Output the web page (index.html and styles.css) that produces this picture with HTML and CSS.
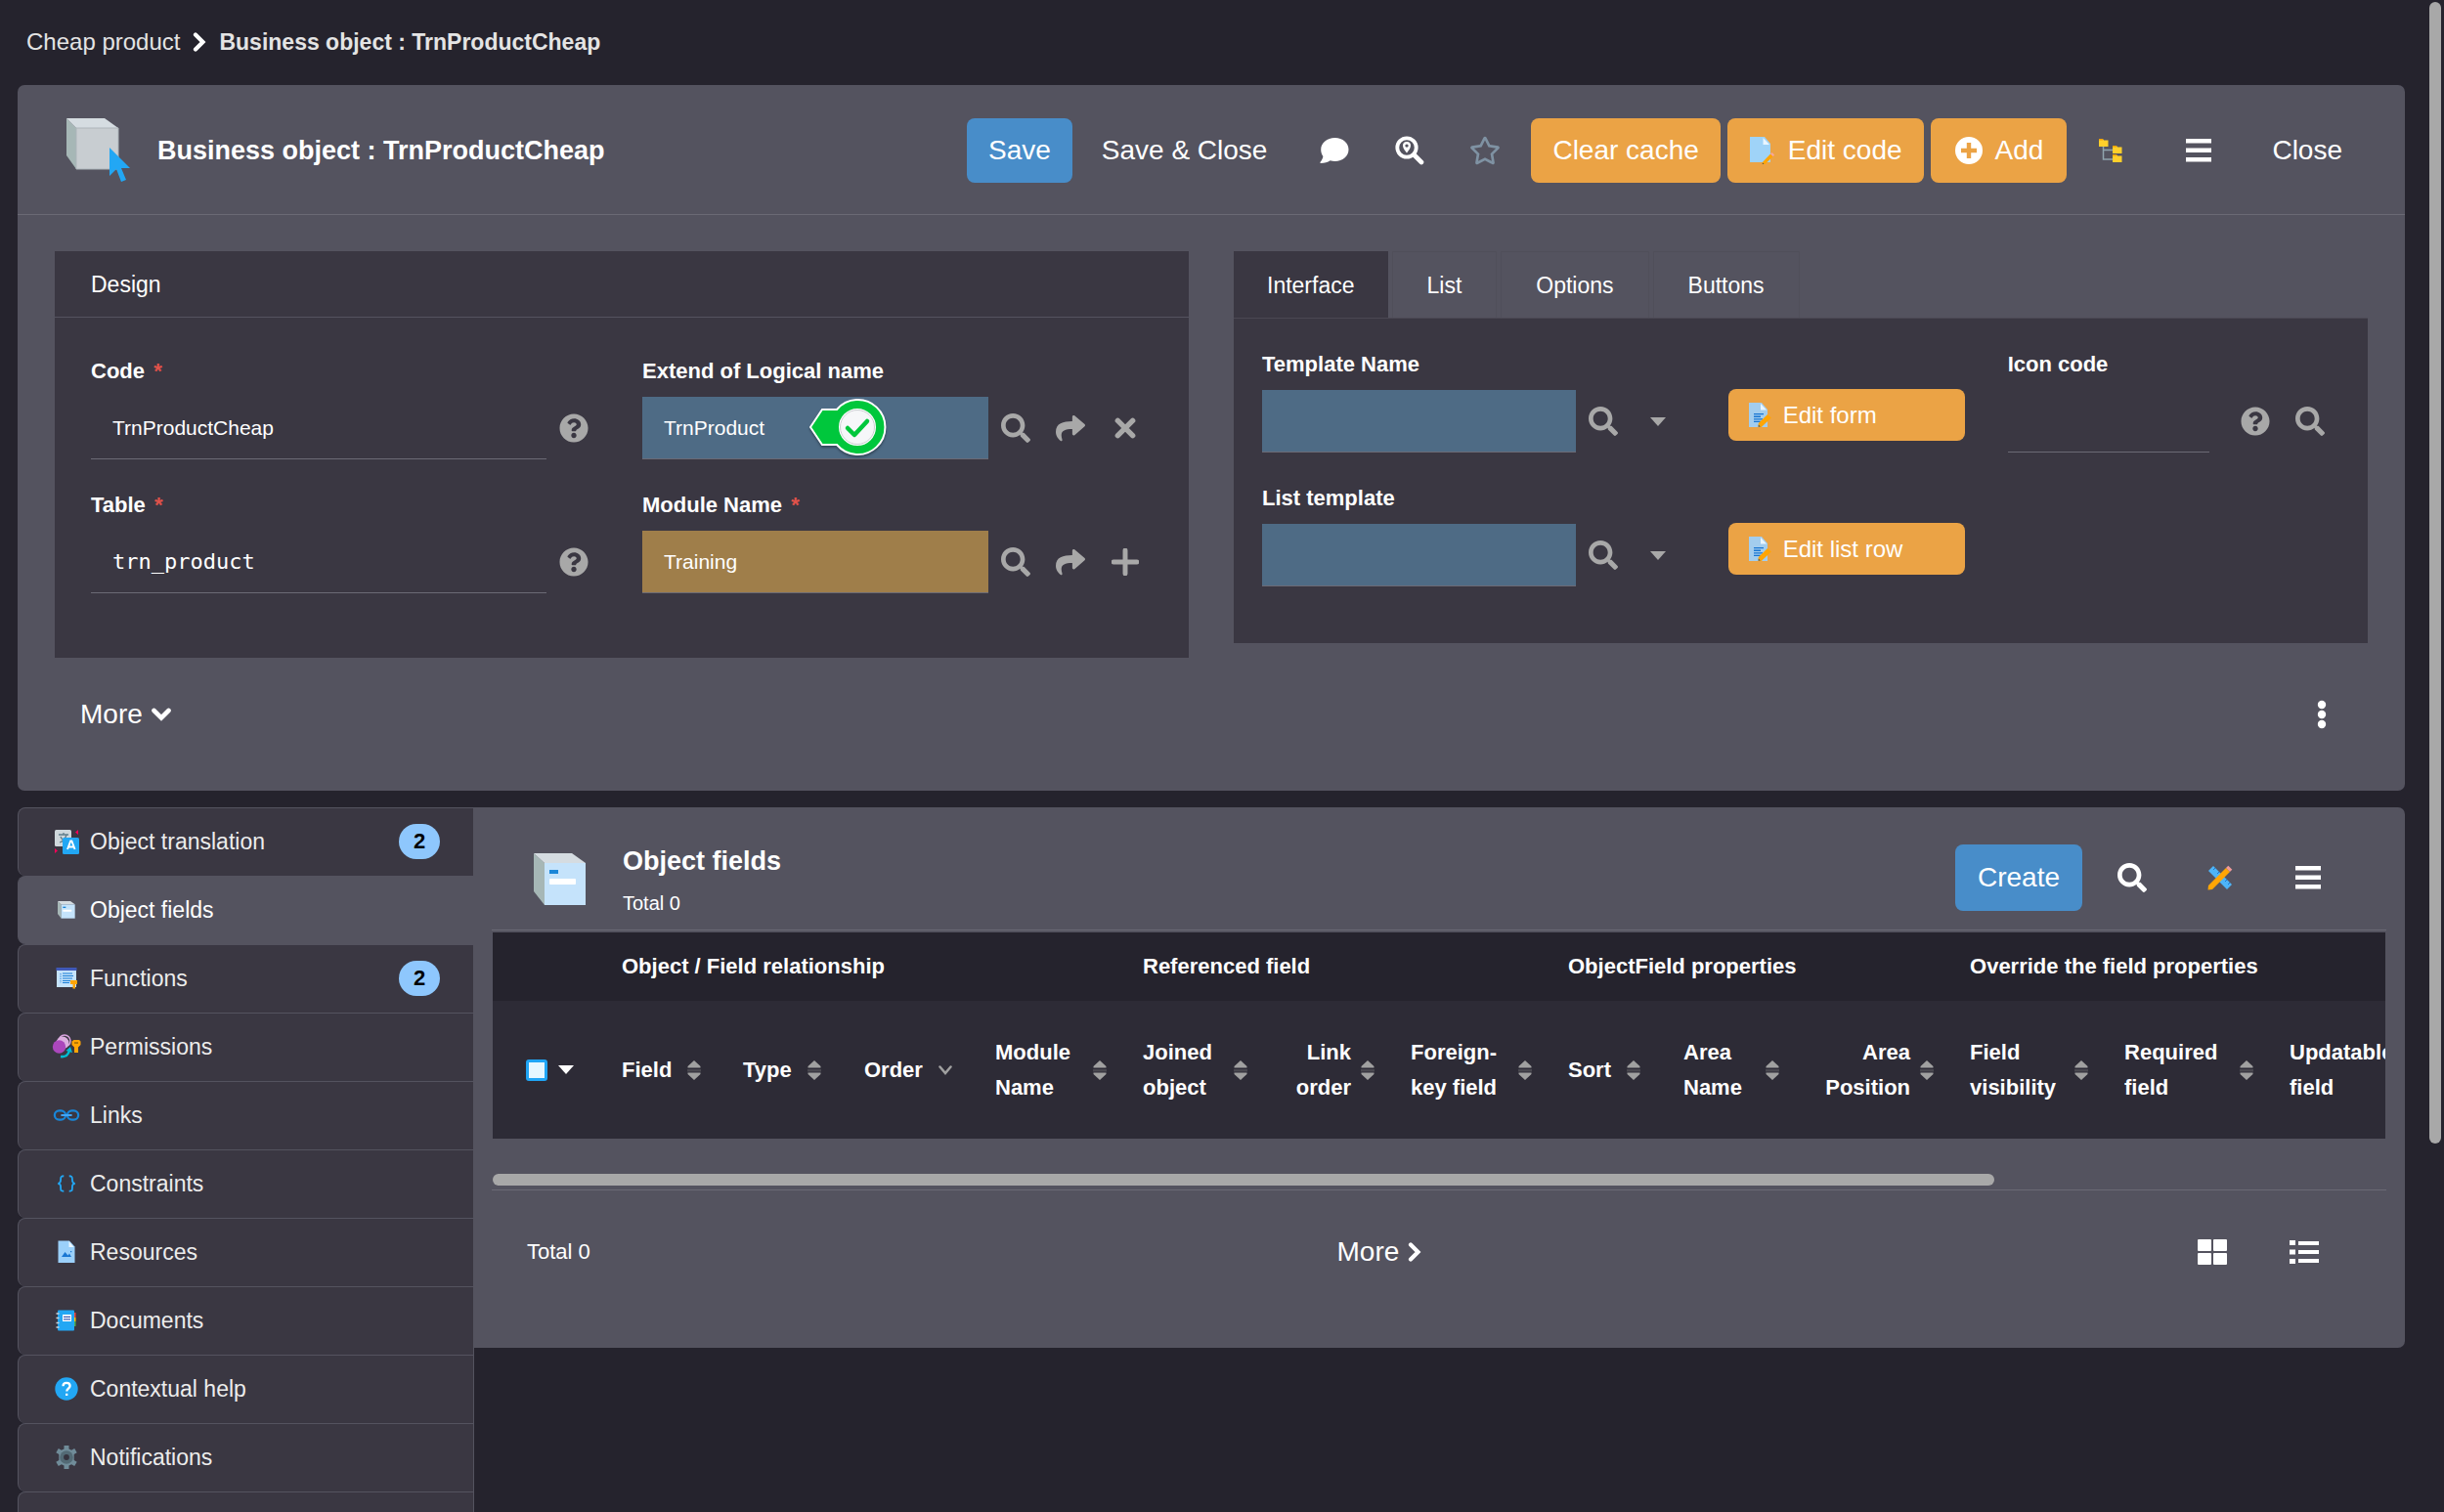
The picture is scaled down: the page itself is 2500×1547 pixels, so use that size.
FILE: index.html
```html
<!DOCTYPE html>
<html lang="en">
<head>
<meta charset="utf-8">
<title>Business object : TrnProductCheap</title>
<link rel="stylesheet" href="styles.css">
</head>
<body>
<svg class="sprite" aria-hidden="true">
  <symbol id="search" viewBox="0 0 512 512"><path d="M505 442.7L405.3 343c-4.500-4.500-10.600-7-17-7H372c27.600-35.300 44-79.700 44-128C416 93.100 322.900 0 208 0S0 93.100 0 208s93.100 208 208 208c48.300 0 92.700-16.400 128-44v16.300c0 6.400 2.500 12.500 7 17l99.700 99.700c9.400 9.400 24.600 9.400 33.900 0l28.300-28.300c9.400-9.400 9.400-24.600.1-34zM208 336c-70.700 0-128-57.200-128-128 0-70.700 57.200-128 128-128 70.700 0 128 57.200 128 128 0 70.700-57.200 128-128 128z"/></symbol>
  <symbol id="help" viewBox="0 0 512 512"><path d="M504 256c0 136.997-111.043 248-248 248S8 392.997 8 256C8 119.083 119.043 8 256 8s248 111.083 248 248zM262.655 90c-54.497 0-89.255 22.957-116.549 63.758-3.536 5.286-2.353 12.415 2.715 16.258l34.699 26.310c5.205 3.947 12.621 3.008 16.665-2.122 17.864-22.658 30.113-35.797 57.303-35.797 20.429 0 45.698 13.148 45.698 32.958 0 14.976-12.363 22.667-32.534 33.976C247.128 238.528 216 254.941 216 296v4c0 6.627 5.373 12 12 12h56c6.627 0 12-5.373 12-12v-1.333c0-28.462 83.186-29.647 83.186-106.667 0-58.002-60.165-102-116.531-102zM256 338c-25.365 0-46 20.635-46 46 0 25.364 20.635 46 46 46s46-20.636 46-46c0-25.365-20.635-46-46-46z"/></symbol>
  <symbol id="share" viewBox="0 0 512 512"><path d="M503.691 189.836L327.687 37.851C312.281 24.546 288 35.347 288 56.015v80.053C127.371 137.907 0 170.100 0 322.326c0 61.441 39.581 122.309 83.333 154.132 13.653 9.931 33.111-2.533 28.077-18.631C66.066 312.814 132.917 274.316 288 272.085V360c0 20.700 24.300 31.453 39.687 18.164l176.004-152c11.071-9.562 11.086-26.753 0-36.328z"/></symbol>
  <symbol id="star" viewBox="0 0 576 512"><path d="M528.1 171.500L382 150.200 316.700 17.800c-11.700-23.600-45.600-23.900-57.400 0L194 150.200 47.900 171.500c-26.200 3.800-36.700 36.100-17.700 54.600l105.700 103-25 145.500c-4.500 26.300 23.200 46 46.400 33.700L288 439.600l130.700 68.700c23.200 12.200 50.900-7.400 46.400-33.700l-25-145.500 105.700-103c19-18.500 8.500-50.800-17.700-54.600zM388.600 312.300l23.700 138.400L288 385.400l-124.300 65.300 23.700-138.400-100.600-98 139-20.200 62.200-126 62.200 126 139 20.200-100.600 98z"/></symbol>
  <symbol id="times" viewBox="0 0 22 22"><path d="M4 4L18 18M18 4L4 18" fill="none" stroke="currentColor" stroke-width="5" stroke-linecap="round"/></symbol>
  <symbol id="plus" viewBox="0 0 26 26"><path d="M13 2V24M2 13H24" fill="none" stroke="currentColor" stroke-width="4.600" stroke-linecap="round"/></symbol>
  <symbol id="caret" viewBox="0 0 16 9"><path d="M0 0H16L8 9z"/></symbol>
  <symbol id="right" viewBox="0 0 14 20"><path d="M3 2.500L10.500 10L3 17.500" fill="none" stroke="currentColor" stroke-width="4.200" stroke-linecap="round"/></symbol>
  <symbol id="down" viewBox="0 0 20 14"><path d="M2.500 3L10 10.500L17.500 3" fill="none" stroke="currentColor" stroke-width="4.600" stroke-linecap="round"/></symbol>
  <symbol id="thin-down" viewBox="0 0 14 10"><path d="M1.500 1.500L7 8L12.500 1.500" fill="none" stroke="currentColor" stroke-width="2.500" stroke-linecap="round"/></symbol>
  <symbol id="comment" viewBox="0 0 30 28"><path d="M15.500 1C23.500 1 29.500 6.200 29.500 13S23.500 25 15.500 25c-1.700 0-3.300-.2-4.800-.7C8 26.200 5 27 1 27c-.7 0-.8-.7-.4-1.200C2 24.200 3.100 22.200 3.400 20 2 18 1.200 15.600 1.200 13 1.200 6.200 7.500 1 15.500 1z"/></symbol>
  <symbol id="zoom-pin" viewBox="0 0 30 30"><circle cx="12" cy="12" r="9.700" fill="none" stroke="currentColor" stroke-width="3.800"/><path d="M19.500 19.500L27 27" stroke="currentColor" stroke-width="4.600" stroke-linecap="round"/><path d="M12 6a4 4 0 0 1 4 4c0 3-2.400 5-4 7.500C10.400 15 8 13 8 10a4 4 0 0 1 4-4zm0 2.400a1.700 1.700 0 1 0 0 3.400 1.700 1.700 0 0 0 0-3.400z" fill-rule="evenodd"/></symbol>
  <symbol id="menu" viewBox="0 0 28 24"><path d="M1 0H27V4.500H1zM1 9.500H27V14H1zM1 19H27V23.500H1z"/></symbol>
  <symbol id="dots" viewBox="0 0 10 30"><circle cx="5" cy="5" r="4.200"/><circle cx="5" cy="15" r="4.200"/><circle cx="5" cy="25" r="4.200"/></symbol>
  <symbol id="add" viewBox="0 0 30 30"><path fill-rule="evenodd" d="M15 1a14 14 0 1 0 0 28 14 14 0 0 0 0-28zM12.800 7h4.400v5.800H23v4.400h-5.800V23h-4.400v-5.800H7v-4.400h5.800z"/></symbol>
  <symbol id="sort" viewBox="0 0 14 20"><path d="M7 0L13.500 6V7.500H.5V6zM7 20L13.500 14V12.500H.5V14z"/><path d="M0 9H14V9.600H0zM0 10.600H14V11.200H0z" opacity=".5"/></symbol>
  <symbol id="tiles" viewBox="0 0 30 26"><rect width="14" height="12" rx="1"/><rect x="16" width="14" height="12" rx="1"/><rect y="14" width="14" height="12" rx="1"/><rect x="16" y="14" width="14" height="12" rx="1"/></symbol>
  <symbol id="list" viewBox="0 0 30 26"><path d="M0 1h6v5H0zM9 2h21v4H9zM0 10.500h6v5H0zM9 11h21v4H9zM0 20h6v5H0zM9 20h21v4H9z"/></symbol>
  <symbol id="tree" viewBox="0 0 24 24"><path d="M4.500 6V21H16M4.500 11.500H16" fill="none" stroke="#90a4ae" stroke-width="1.500"/><path d="M0 0h4l1 1.500h4.500V8H0zM14 7h4l1 1.500h4.500V15H14zM14 16h4l1 1.500h4.500V24H14z" fill="#ffcf2b"/><path d="M0 0h4v1.500H0zM14 7h4v1.500h-4zM14 16h4v1.500h-4z" fill="#f5a100"/></symbol>
  <symbol id="file-edit" viewBox="0 0 26 28"><path d="M0 0h15l6 7v19H0z" fill="#9fd3f8"/><path d="M13.500 1l6.500 7h-6.500z" fill="#eaf6ff"/><path d="M21 17.500l2.600 2.400L15 28.500l-2.200-.2.300-2.600z" fill="#ffa505"/><path d="M21 17.500l1.500-1.500 2.600 2.400-1.500 1.500z" fill="#f5a6a0"/><path d="M12.900 26.500l1.500 1.500-1.600.3z" fill="#37474f"/></symbol>
  <symbol id="form-edit" viewBox="0 0 24 26"><path d="M0 0h13l6 7v18H0z" fill="#a3cdee"/><path d="M12 1l6 6.500h-6z" fill="#eaf6ff"/><path d="M5 11h10v1.300H5zM5 13.600h7v1.300H5zM5 16.200h9v1.300H5zM5 18.800h7v1.300H5z" fill="#1976d2"/><path d="M19 12l3.800 3.600L12.800 25l-3.300-.2.300-3.800z" fill="#ffa505"/><path d="M9.800 22.500l2 2-2.300.3z" fill="#455a64"/></symbol>
  <symbol id="ruler" viewBox="0 0 26 26"><path d="M1 6L6 1L25 20L20 25z" fill="#4db4f7"/><path d="M8 3l-2 2M12 7l-2 2M16 11l-2 2M20 15l-2 2M23 18l-2 2" stroke="#1976d2"/><path d="M19 3l4 4L5 25l-4.500.5L1 21z" fill="#ffa505"/><path d="M19 3l2.300-2.300 4 4L23 7z" fill="#ef9a9a"/></symbol>
  <symbol id="cube-cursor" viewBox="0 0 66 66"><path d="M0 0L10 10V52L0 38z" fill="#a6b7b6"/><path d="M0 0H39L53 10H10z" fill="#d5dce1"/><path d="M10 10H53V52H10z" fill="#c8cdd1" stroke="#adb5ba"/><path d="M44 30L65 51H56L61 63L56 65L51 52L44 59z" fill="#22a7f4"/></symbol>
  <symbol id="cube-field" viewBox="0 0 54 54"><path d="M0 0L11 10V53L0 39z" fill="#a6b7b6"/><path d="M0 0H39L53 10H11z" fill="#d5dce1"/><path d="M11 10H53V53H11z" fill="#c5e3fb"/><path d="M16 17h9v4h-9z" fill="#1b86d8"/><rect x="16" y="26" width="27" height="6" rx="1" fill="#fff"/></symbol>
  <symbol id="translate" viewBox="0 0 26 26"><rect x="1" y="1" width="17" height="17" rx="1.500" fill="#cfd8dc"/><path d="M5 6h10M10 4v2M13 6c-1 4-4 7-7 8M7 8c1 3 4 5 7 6" stroke="#607d8b" stroke-width="1.300" fill="none"/><path d="M25 1v5l-3-2.500zM1 20v5l3-2.500z" fill="#f50057"/><rect x="9" y="9" width="17" height="17" rx="1.500" fill="#22a7f4"/><path d="M14 21l3.200-8.500h1.200L21.600 21M15.200 18.500h5" stroke="#fff" stroke-width="1.900" fill="none"/></symbol>
  <symbol id="functions" viewBox="0 0 26 26"><path d="M3 3h20v19H3z" fill="#c5e3fb"/><path d="M2.500 2h21v3h-21z" fill="#4059b8"/><path d="M9 8h10M9 10.500h11M9 13h10M9 15.500h8M9 17.500h7" stroke="#1b7fd6" stroke-width="1.200"/><path d="M7 8v10" stroke="#1b7fd6" stroke-dasharray="1.200"/><path d="M17 15h7v4h-2v4.500h-2.500V19H17z" fill="#ffa505"/></symbol>
  <symbol id="permissions" viewBox="0 0 30 26"><circle cx="13" cy="7" r="6" fill="none" stroke="#d9a3df" stroke-width="1.500"/><circle cx="11" cy="9" r="6.500" fill="#dcaee0"/><circle cx="7.500" cy="13" r="6.700" fill="#ab47bc"/><path d="M9 23q7 1 9-6" stroke="#00bcd4" stroke-width="2.500" fill="none"/><path d="M14.500 17l4.500-4 2 6z" fill="#00bcd4"/><path d="M22.500 6h5.500l1.500 1.500V11L27 13.500V19h-4v-5.500L20.500 11V7.500z" fill="#ffa505"/><path d="M23 9h4" stroke="#6d4c00"/></symbol>
  <symbol id="links" viewBox="0 0 30 14"><rect x="2" y="2" width="12" height="10" rx="5" fill="none" stroke="#1986d8" stroke-width="2.400"/><rect x="16" y="2" width="12" height="10" rx="5" fill="none" stroke="#1986d8" stroke-width="2.400"/><path d="M9 7h12" stroke="#42a5f5" stroke-width="2.200"/></symbol>
  <symbol id="braces" viewBox="0 0 22 20"><path d="M8 1.500C5 1.500 4.500 2.500 4.500 5S4.500 9.500 1.500 10C4.500 10.500 4.500 12 4.500 15S5 18.500 8 18.500M14 1.500C17 1.500 17.500 2.500 17.500 5S17.500 9.500 20.500 10C17.500 10.500 17.500 12 17.500 15S17 18.500 14 18.500" fill="none" stroke="#22a7f4" stroke-width="2"/></symbol>
  <symbol id="resource" viewBox="0 0 18 24"><path d="M.5.500H12l5.500 6V23H.5z" fill="#9bd0fa"/><path d="M11.500 1l5 6h-5z" fill="#eaf6ff"/><path d="M4 17l3.500-5 3 3.500 1.500-2 2 3.500zM13 11h1.300v1.300H13z" fill="#1976d2"/></symbol>
  <symbol id="document" viewBox="0 0 22 22"><path d="M18 3h2.500v5H18z" fill="#f44336"/><path d="M18 8h2.500v4H18z" fill="#ffc107"/><path d="M18 12h2.500v5H18z" fill="#4caf50"/><rect x="2" y=".5" width="17" height="21" rx="1" fill="#22a7f4"/><path d="M.5 4h3M.5 8.500h3M.5 13.500h3M.5 18h3" stroke="#cfd8dc" stroke-width="1.300"/><path d="M7 5h9v7H7z" fill="#fff"/><path d="M8 7.300h7M8 9.800h7" stroke="#3f5fb5" stroke-width="1.300"/></symbol>
  <symbol id="gear" viewBox="0 0 24 24"><path d="M9.500 0h5v3.600l2.600 1.100 3.100-1.800 2.500 4.300-3 1.900v5.800l3 1.900-2.500 4.300-3.100-1.800-2.600 1.100V24h-5v-3.600l-2.600-1.100-3.100 1.800-2.500-4.300 3-1.900V9.100l-3-1.900 2.500-4.300 3.100 1.800 2.600-1.100z" fill="#708c99"/><circle cx="12" cy="12" r="6.800" fill="#536a75"/><circle cx="12" cy="12" r="2.900" fill="#35333e"/></symbol>
</svg>

<div class="app">
  <nav class="breadcrumb" aria-label="Breadcrumb">
    <a href="#">Cheap product</a>
    <svg class="chevron-right"><use href="#right"/></svg>
    <strong>Business object : TrnProductCheap</strong>
  </nav>

  <main>
    <section class="panel">
      <header class="panel-head">
        <svg class="icon-66"><use href="#cube-cursor"/></svg>
        <h1>Business object : TrnProductCheap</h1>
        <div class="toolbar">
          <button class="btn primary">Save</button>
          <button class="btn plain wide">Save &amp; Close</button>
          <button class="tool narrow" aria-label="Comment"><svg class="icon-30"><use href="#comment"/></svg></button>
          <button class="tool narrow" aria-label="Locate"><svg class="icon-30"><use href="#zoom-pin"/></svg></button>
          <button class="tool narrow star" aria-label="Favourite"><svg class="icon-32"><use href="#star"/></svg></button>
          <div class="group">
            <button class="btn warning">Clear cache</button>
            <button class="btn warning"><svg class="icon-28"><use href="#file-edit"/></svg>Edit code</button>
            <button class="btn warning add"><svg class="icon-30"><use href="#add"/></svg>Add</button>
          </div>
          <button class="tool" aria-label="Tree view"><svg class="icon-24"><use href="#tree"/></svg></button>
          <button class="tool" aria-label="Menu"><svg class="icon-28"><use href="#menu"/></svg></button>
          <button class="btn plain wide">Close</button>
        </div>
      </header>

      <div class="columns">
        <div class="card">
          <h2>Design</h2>
          <div class="fields two">
            <div class="field">
              <label for="code">Code <i>*</i></label>
              <div class="control"><input id="code" value="TrnProductCheap"><button class="mini" aria-label="Help"><svg class="icon-30"><use href="#help"/></svg></button></div>
            </div>
            <div class="field">
              <label for="extend">Extend of Logical name</label>
              <div class="control">
                <input id="extend" class="blue" value="TrnProduct">
                <svg class="marker" viewBox="0 0 80 62"><path d="M2 30L14 12H29A28 28 0 1 1 29 48H14z" fill="#00c73c" stroke="#fff" stroke-width="2"/><circle cx="50" cy="30" r="18" fill="#f6f7f9" stroke="#fff" stroke-width="2"/><circle cx="50" cy="30" r="17.500" fill="none" stroke="#c9cdd0"/><path d="M40 31L47 38L60 24" fill="none" stroke="#00c73c" stroke-width="4.500" stroke-linecap="round" stroke-linejoin="round"/></svg>
                <button class="mini" aria-label="Search"><svg class="icon-30"><use href="#search"/></svg></button>
                <button class="mini" aria-label="Open"><svg class="icon-30"><use href="#share"/></svg></button>
                <button class="mini" aria-label="Clear"><svg class="icon-24"><use href="#times"/></svg></button>
              </div>
            </div>
            <div class="field">
              <label for="table">Table <i>*</i></label>
              <div class="control"><input id="table" class="mono" value="trn_product"><button class="mini" aria-label="Help"><svg class="icon-30"><use href="#help"/></svg></button></div>
            </div>
            <div class="field">
              <label for="module">Module Name <i>*</i></label>
              <div class="control">
                <input id="module" class="gold" value="Training">
                <button class="mini" aria-label="Search"><svg class="icon-30"><use href="#search"/></svg></button>
                <button class="mini" aria-label="Open"><svg class="icon-30"><use href="#share"/></svg></button>
                <button class="mini" aria-label="Add"><svg class="icon-28"><use href="#plus"/></svg></button>
              </div>
            </div>
          </div>
        </div>

        <div class="tabbed">
          <div class="tabs" role="tablist">
            <button role="tab" class="active" aria-selected="true">Interface</button>
            <button role="tab">List</button>
            <button role="tab">Options</button>
            <button role="tab">Buttons</button>
          </div>
          <div class="fields three">
            <div class="field">
              <label for="template">Template Name</label>
              <div class="control"><input id="template" class="blue"><button class="mini" aria-label="Search"><svg class="icon-30"><use href="#search"/></svg></button><button class="mini" aria-label="Choose"><svg class="icon-16"><use href="#caret"/></svg></button></div>
            </div>
            <div class="field action"><button class="edit"><svg class="icon-26"><use href="#form-edit"/></svg>Edit form</button></div>
            <div class="field">
              <label for="iconcode">Icon code</label>
              <div class="control"><input id="iconcode"><button class="mini spaced" aria-label="Help"><svg class="icon-30"><use href="#help"/></svg></button><button class="mini" aria-label="Search"><svg class="icon-30"><use href="#search"/></svg></button></div>
            </div>
            <div class="field">
              <label for="listtemplate">List template</label>
              <div class="control"><input id="listtemplate" class="blue"><button class="mini" aria-label="Search"><svg class="icon-30"><use href="#search"/></svg></button><button class="mini" aria-label="Choose"><svg class="icon-16"><use href="#caret"/></svg></button></div>
            </div>
            <div class="field action"><button class="edit"><svg class="icon-26"><use href="#form-edit"/></svg>Edit list row</button></div>
          </div>
        </div>
      </div>

      <footer class="panel-foot">
        <button class="more">More <svg class="icon-20"><use href="#down"/></svg></button>
        <button class="tool" aria-label="Options"><svg class="icon-30"><use href="#dots"/></svg></button>
      </footer>
    </section>

    <div class="lower">
      <nav class="side" aria-label="Related">
        <a href="#"><svg class="icon-26"><use href="#translate"/></svg><span>Object translation</span><b>2</b></a>
        <a href="#" class="active"><svg class="icon-18"><use href="#cube-field"/></svg><span>Object fields</span></a>
        <a href="#"><svg class="icon-26"><use href="#functions"/></svg><span>Functions</span><b>2</b></a>
        <a href="#"><svg class="icon-30"><use href="#permissions"/></svg><span>Permissions</span></a>
        <a href="#"><svg class="icon-28"><use href="#links"/></svg><span>Links</span></a>
        <a href="#"><svg class="icon-20"><use href="#braces"/></svg><span>Constraints</span></a>
        <a href="#"><svg class="icon-24"><use href="#resource"/></svg><span>Resources</span></a>
        <a href="#"><svg class="icon-22"><use href="#document"/></svg><span>Documents</span></a>
        <a href="#"><svg class="icon-24 info" viewBox="0 0 24 24"><circle cx="12" cy="12" r="11.700"/><path d="M8.500 9.300C8.500 7 10 5.800 12 5.800s3.600 1.200 3.600 3.200c0 2.600-3.300 2.800-3.300 5.500M12.200 16.700v2.300" fill="none" stroke="#fff" stroke-width="2.300"/></svg><span>Contextual help</span></a>
        <a href="#"><svg class="icon-24"><use href="#gear"/></svg><span>Notifications</span></a>
        <a href="#" aria-label="Next"></a>
      </nav>

      <section class="list-panel">
        <header class="list-head">
          <svg class="icon-54"><use href="#cube-field"/></svg>
          <div class="list-title"><h2>Object fields</h2><p>Total 0</p></div>
          <div class="toolbar">
            <button class="btn primary create">Create</button>
            <button class="tool" aria-label="Search"><svg class="icon-30"><use href="#search"/></svg></button>
            <button class="tool" aria-label="Design"><svg class="icon-26"><use href="#ruler"/></svg></button>
            <button class="tool" aria-label="Menu"><svg class="icon-28"><use href="#menu"/></svg></button>
          </div>
        </header>

        <div class="scroller">
          <table>
            <colgroup><col class="w112"><col class="w124"><col class="w124"><col class="w134"><col class="w151"><col class="w144"><col class="w130"><col class="w161"><col class="w118"><col class="w135"><col class="w158"><col class="w158"><col class="w169"><col class="w169"></colgroup>
            <thead>
              <tr class="groups"><th></th><th colspan="4">Object / Field relationship</th><th colspan="3">Referenced field</th><th colspan="3">ObjectField properties</th><th colspan="3">Override the field properties</th></tr>
              <tr class="heads">
                <th><div class="pick"><input type="checkbox" aria-label="Select all"><svg class="icon-16"><use href="#caret"/></svg></div></th>
                <th><div class="tight">Field<svg class="sort"><use href="#sort"/></svg></div></th>
                <th><div class="tight">Type<svg class="sort"><use href="#sort"/></svg></div></th>
                <th><div class="tight">Order<svg class="sort"><use href="#thin-down"/></svg></div></th>
                <th><div><span>Module<br>Name</span><svg class="sort"><use href="#sort"/></svg></div></th>
                <th><div><span>Joined<br>object</span><svg class="sort"><use href="#sort"/></svg></div></th>
                <th><div class="num"><span>Link<br>order</span><svg class="sort"><use href="#sort"/></svg></div></th>
                <th><div><span>Foreign-<br>key field</span><svg class="sort"><use href="#sort"/></svg></div></th>
                <th><div class="tight">Sort<svg class="sort"><use href="#sort"/></svg></div></th>
                <th><div><span>Area<br>Name</span><svg class="sort"><use href="#sort"/></svg></div></th>
                <th><div class="num"><span>Area<br>Position</span><svg class="sort"><use href="#sort"/></svg></div></th>
                <th><div><span>Field<br>visibility</span><svg class="sort"><use href="#sort"/></svg></div></th>
                <th><div><span>Required<br>field</span><svg class="sort"><use href="#sort"/></svg></div></th>
                <th><div><span>Updatable<br>field</span><svg class="sort"><use href="#sort"/></svg></div></th>
              </tr>
            </thead>
          </table>
        </div>
        <div class="hbar"><div class="hthumb"></div></div>

        <footer class="list-foot">
          <span>Total 0</span>
          <button class="more">More <svg class="chevron-right"><use href="#right"/></svg></button>
          <div class="views">
            <button class="tool" aria-label="Tiles"><svg class="icon-30"><use href="#tiles"/></svg></button>
            <button class="tool" aria-label="List"><svg class="icon-30"><use href="#list"/></svg></button>
          </div>
        </footer>
      </section>
    </div>
  </main>
  <div class="vthumb"></div>
</div>
</body>
</html>
```
FILE: styles.css
```css
* { box-sizing: border-box; }

body {
  margin: 0;
  background: #25232d;
  color: #fff;
  font: 23px/30px "Liberation Sans", Arial, sans-serif;
}

h1, h2, p { margin: 0; }
a { color: inherit; text-decoration: none; }

button {
  margin: 0;
  padding: 0;
  border: 0;
  background: none;
  color: inherit;
  font: inherit;
  white-space: nowrap;
}

svg { fill: currentColor; flex: none; display: block; }
.sprite { position: absolute; width: 0; height: 0; }
.icon-16 { width: 16px; height: 9px; }
.icon-18 { width: 18px; height: 18px; }
.icon-20 { width: 20px; height: 20px; }
.icon-22 { width: 22px; height: 22px; }
.icon-24 { width: 24px; height: 24px; }
.icon-26 { width: 26px; height: 26px; }
.icon-28 { width: 28px; height: 28px; }
.icon-30 { width: 30px; height: 30px; }
.icon-32 { width: 32px; height: 30px; }
.icon-54 { width: 54px; height: 54px; }
.icon-66 { width: 66px; height: 66px; }
.chevron-right { width: 14px; height: 20px; }

.app {
  position: relative;
  height: 100vh;
  overflow: hidden;
}

.vthumb {
  position: absolute;
  top: 2px;
  right: 3px;
  width: 12px;
  height: 1168px;
  border-radius: 6px;
  background: #a8a8a8;
}

.breadcrumb {
  display: flex;
  align-items: center;
  gap: 13px;
  height: 87px;
  padding: 0 27px 2px;
  color: #e4e4e4;
}
.breadcrumb a { font-size: 24px; }
.breadcrumb svg { color: #fff; }

main { padding: 0 40px 0 18px; }

.panel {
  border-radius: 7px;
  background: #54535f;
}

.panel-head {
  display: flex;
  align-items: center;
  height: 133px;
  padding: 2px 34px 0 50px;
  border-bottom: 1px solid #6b6a75;
}
.panel-head h1 { margin-left: 27px; font-size: 27px; }

.toolbar {
  display: flex;
  align-items: center;
  margin-left: auto;
}
.group { display: flex; gap: 7px; margin-left: 9px; }

.btn {
  display: flex;
  align-items: center;
  gap: 12px;
  height: 66px;
  padding: 0 22px;
  border-radius: 8px;
  font-size: 28px;
}
.btn.primary { background: #488dc9; }
.btn.warning { background: #eba345; }
.btn.add { padding: 0 24px; }
.btn.wide { padding: 0 30px; }
.btn.create { height: 68px; padding: 0 23px; margin-right: 6px; }

.tool {
  display: flex;
  align-items: center;
  justify-content: center;
  width: 90px;
  height: 66px;
}
.tool.narrow { width: 77px; }
.tool.star { color: #7f92a3; }

.columns {
  display: grid;
  grid-template-columns: 1fr 1fr;
  align-items: start;
  gap: 46px;
  padding: 37px 38px 0;
}

.card { background: #3a3742; }
.card h2 {
  height: 68px;
  padding: 0 37px;
  border-bottom: 1px solid #54535f;
  font-size: 23px;
  font-weight: 400;
  line-height: 68px;
}

.tabs { display: flex; gap: 4px; }
.tabs button {
  height: 68px;
  padding: 0 35px;
  border: 1px solid #504f5a;
  border-bottom: 0;
}
.tabs .active { padding: 0 33px; border-color: #3a3742; background: #3a3742; }

.fields {
  display: grid;
  row-gap: 32px;
}
.fields.two {
  grid-template-columns: 1fr 1fr;
  padding: 40px 16px 66px;
}
.fields.three {
  grid-template-columns: 5fr 3fr 4fr;
  padding: 32px 8px 58px;
  border-top: 1px solid #4a4853;
  background: #3a3742;
}
.field { padding: 0 21px; min-width: 0; }
.three .field { padding-right: 23px; }
.field label {
  display: block;
  margin-bottom: 11px;
  font-size: 22px;
  font-weight: 700;
}
.field i { margin-left: 3px; color: #e0524a; font-style: normal; }

.control {
  position: relative;
  display: flex;
  align-items: center;
}
.control input {
  flex: 1;
  min-width: 0;
  height: 64px;
  padding: 0 22px;
  border: 0;
  border-bottom: 1px solid #6b6a75;
  border-radius: 0;
  outline: 0;
  background: none;
  color: #fff;
  font: 21px "Liberation Sans", Arial, sans-serif;
}
.control .blue { background: #4e6b85; }
.control .gold { background: #9f7e4a; }
.control .mono { font: 22px "DejaVu Sans Mono", monospace; }
.mini {
  display: flex;
  align-items: center;
  justify-content: center;
  width: 56px;
  height: 56px;
  color: #a8a8a8;
}
.mini.spaced { margin-left: 19px; }

/* Validation marker laid over the end of the value */
.marker {
  position: absolute;
  top: 1px;
  left: 170px;
  width: 80px;
  height: 62px;
  filter: drop-shadow(0 2px 1px #33475a);
}

.action { padding-top: 40px; }
.edit {
  display: flex;
  align-items: center;
  gap: 10px;
  width: 100%;
  height: 53px;
  padding: 0 20px;
  border-radius: 8px;
  background: #eba345;
  font-size: 24px;
}

.panel-foot {
  display: flex;
  align-items: center;
  justify-content: space-between;
  height: 136px;
  padding: 0 40px 20px 64px;
}
.more {
  display: flex;
  align-items: center;
  gap: 9px;
  font-size: 28px;
}

.lower {
  display: flex;
  align-items: flex-start;
  margin-top: 17px;
}

.side { width: 467px; flex: none; }
.side a {
  display: grid;
  grid-template-columns: 30px 1fr auto;
  align-items: center;
  gap: 9px;
  height: 70px;
  padding: 0 34px 2px;
  border: 1px solid #54535f;
  border-bottom: 0;
  border-radius: 8px 0 0 8px;
  background: #3a3742;
  color: #ececec;
}
.side svg { justify-self: center; }
.side .active { background: #54535f; color: #fff; }
.side b {
  width: 42px;
  height: 36px;
  border-radius: 18px;
  background: #8ec7fd;
  color: #000;
  font-size: 22px;
  line-height: 36px;
  text-align: center;
}
.side .info { fill: #22a7f4; }

.list-panel {
  flex: 1;
  min-width: 0;
  padding: 0 19px 0 18px;
  border-radius: 0 7px 7px 0;
  background: #54535f;
}

.list-head {
  display: flex;
  align-items: center;
  height: 126px;
  padding: 22px 35px 0 43px;
  border-bottom: 1px solid #6b6a75;
}
.list-title { margin: 2px 0 0 37px; }
.list-title h2 { font-size: 27px; line-height: 36px; }
.list-title p { padding-top: 10px; font-size: 20px; line-height: 30px; }
.list-head .toolbar { margin-bottom: 3px; }

.scroller {
  margin: 2px 1px 0;
  overflow: hidden;
}
table {
  width: 1987px;
  table-layout: fixed;
  border-collapse: collapse;
  font-size: 22px;
}
.w112 { width: 112px; }
.w118 { width: 118px; }
.w124 { width: 124px; }
.w130 { width: 130px; }
.w134 { width: 134px; }
.w135 { width: 135px; }
.w144 { width: 144px; }
.w151 { width: 151px; }
.w158 { width: 158px; }
.w161 { width: 161px; }
.w169 { width: 169px; }

th {
  padding: 0 17px 0 20px;
  text-align: left;
  white-space: nowrap;
}
.groups { height: 70px; background: #25232d; }
.heads { height: 141px; background: #2d2b36; line-height: 36px; }
.heads div {
  display: flex;
  align-items: center;
  justify-content: space-between;
}
.heads .tight { justify-content: flex-start; gap: 16px; }
.heads .num { justify-content: flex-end; gap: 10px; text-align: right; }
.sort { width: 14px; height: 20px; color: #a0a0a0; }
.heads .pick { justify-content: flex-start; gap: 11px; padding-left: 14px; }

.pick input {
  appearance: none;
  width: 22px;
  height: 22px;
  margin: 0;
  border: 3px solid #1fa5f5;
  border-radius: 3px;
  background: #e5f7ff;
}

.hbar {
  padding: 36px 1px 4px;
  border-bottom: 1px solid #6b6a75;
}
.hthumb {
  width: 1536px;
  max-width: 100%;
  height: 12px;
  border-radius: 6px;
  background: #a8a8a8;
}

.list-foot {
  display: flex;
  align-items: center;
  justify-content: space-between;
  height: 161px;
  padding: 0 39px 36px 36px;
  font-size: 22px;
}
.views { display: flex; gap: 4px; }
```
